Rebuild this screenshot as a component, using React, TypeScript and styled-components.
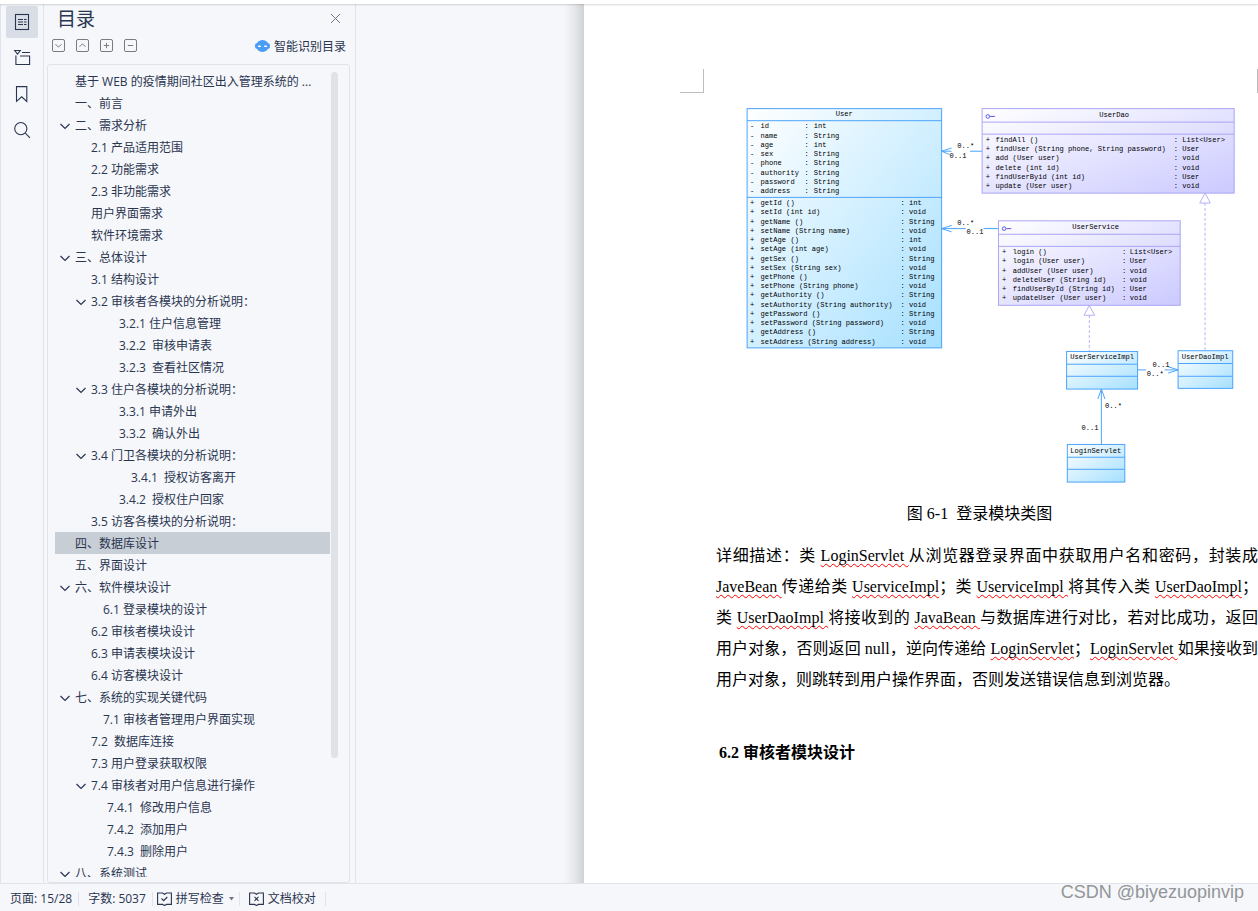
import React from "react";
import styled, { createGlobalStyle, css } from "styled-components";

const ink = "#2a3550";
const chrome = "#f5f7fa";
const line = "#e0e3e9";

const GlobalStyle = createGlobalStyle`
  * { box-sizing: border-box; }
  html, body, #root { height: 100%; }
  body {
    margin: 0;
    overflow: hidden;
    background: ${chrome};
    color: ${ink};
    font: 12px/22px "Open Sans", "Noto Sans CJK SC", sans-serif;
  }
  button { font: inherit; color: inherit; border: 0; padding: 0; background: none; cursor: pointer; }
`;

const Shell = styled.div`
  display: flex;
  flex-direction: column;
  height: 100vh;
`;

const RibbonEdge = styled.div`
  position: relative;
  z-index: 1;
  flex: none;
  height: 4px;
  background: #fff;
  box-shadow: 0 1px 2px rgba(0, 0, 0, 0.16);
`;

const Workspace = styled.div`
  flex: 1;
  min-height: 0;
  display: flex;
`;

const Rail = styled.nav`
  flex: none;
  width: 44px;
  display: flex;
  flex-direction: column;
  align-items: center;
  gap: 4px;
  padding-top: 2px;
  border: solid ${line};
  border-width: 0 1px;
`;

const RailButton = styled.button<{ $active?: boolean }>`
  width: 32px;
  height: 32px;
  display: grid;
  place-items: center;
  border-radius: 2px;
  background: ${(p) => (p.$active ? "#d9dde5" : "transparent")};
`;

const Panel = styled.aside`
  flex: none;
  width: 312px;
  display: flex;
  flex-direction: column;
  border-right: 1px solid ${line};
`;

const PanelHead = styled.header`
  display: flex;
  align-items: center;
  justify-content: space-between;
  height: 29px;
  padding: 0 14px 0 13px;
`;

const PanelTitle = styled.h1`
  margin: 0;
  font-size: 19px;
  font-weight: 400;
  line-height: 30px;
`;

const IconButton = styled.button`
  display: grid;
  place-items: center;
`;

const PanelTools = styled.div`
  display: flex;
  align-items: center;
  gap: 11px;
  height: 31px;
  padding: 0 9px 6px 8px;
`;

const SmartButton = styled.button`
  display: flex;
  align-items: center;
  gap: 4px;
  margin-left: auto;
`;

const SmartLabel = styled.span`
  padding-top: 2px;
`;

const TreeBox = styled.div`
  flex: 1;
  min-height: 0;
  display: flex;
  gap: 1px;
  margin: 0 5px 0 3px;
  padding: 5px 11px 5px 7px;
  border: 1px solid ${line};
  border-radius: 3px;
`;

const Tree = styled.ul`
  flex: 1;
  min-width: 0;
  margin: 0;
  padding: 0;
  list-style: none;
  overflow: hidden;
`;

const TreeRow = styled.button<{ $depth: number; $selected: boolean }>`
  display: flex;
  align-items: center;
  gap: 4px;
  width: 100%;
  height: 22px;
  padding-top: 2px;
  padding-left: ${(p) => 4 + 16 * p.$depth}px;
  text-align: left;
  white-space: pre;
  background: ${(p) => (p.$selected ? "#c8ced6" : "transparent")};
`;

const ChevronSlot = styled.span`
  flex: none;
  display: grid;
  place-items: center;
  width: 12px;
  height: 12px;
`;

const ScrollThumb = styled.div`
  flex: none;
  width: 7px;
  height: 85%;
  margin-top: 2px;
  border-radius: 4px;
  background: #dfe2e6;
`;

const Desk = styled.main`
  flex: 1;
  min-width: 0;
  display: flex;
  overflow: hidden;
`;

const DeskMargin = styled.div`
  flex: none;
  width: 228px;
  background: linear-gradient(to left, #d0d3d5 0, #e6e8eb 10px, ${chrome} 20px);
`;

const Sheet = styled.article`
  flex: 1;
  min-width: 0;
  padding-top: 65px;
  background: #fff;
  color: #000;
  font: 16px/31px "Liberation Serif", "Noto Sans CJK SC", serif;
`;

const CropRow = styled.div`
  display: flex;
  justify-content: space-between;
  height: 24px;
  padding-left: 96px;
`;

const CropMark = styled.span<{ $side: "left" | "right" }>`
  height: 24px;
  ${(p) =>
    p.$side === "left"
      ? css`
          width: 24px;
          border-right: 1px solid #bdbdbd;
          border-bottom: 1px solid #bdbdbd;
        `
      : css`
          width: 1px;
          background: #bdbdbd;
        `}
`;

const Column = styled.div`
  padding: 7px 0 0 132px;
`;

const Figure = styled.figure`
  margin: 0;
`;

const Diagram = styled.svg`
  display: block;
  width: 497px;
  height: 390px;
  margin-left: 24px;
  font: 10px "Liberation Mono", monospace;
  white-space: pre;
`;

const Caption = styled.figcaption`
  padding: 8px 15px 0 0;
  text-align: center;
  white-space: pre;
`;

const Paragraph = styled.p`
  margin: 11px 0 0;
  text-align: justify;
`;

const Misspelt = styled.span`
  text-decoration: underline wavy #f00 1px;
  text-decoration-skip-ink: none;
  text-underline-offset: 2px;
`;

const SectionTitle = styled.h2`
  margin: 42px 0 0 3px;
  font-size: 16px;
  line-height: 31px;
`;

const StatusBar = styled.footer`
  flex: none;
  display: flex;
  align-items: center;
  height: 28px;
  padding: 2px 0 0 1px;
  border-top: 1px solid ${line};
`;

const StatusItem = styled.button`
  display: flex;
  align-items: center;
  gap: 4px;
  height: 14px;
  padding: 0 6px 0 9px;
  border-right: 1px solid ${line};
  white-space: pre;
`;

const StatusTool = styled(StatusItem)`
  padding: 0 4px;
`;

const StatusWideTool = styled(StatusItem)`
  padding: 0 9px;
`;

const Watermark = styled.div`
  position: absolute;
  z-index: 2;
  right: 14px;
  bottom: 8px;
  color: #939598;
  font: 18px/22px "Liberation Sans", sans-serif;
`;

type Entry = { depth: number; label: string; open?: boolean; selected?: boolean };

const entries: Entry[] = [
  { depth: 0, label: "基于 WEB 的疫情期间社区出入管理系统的 ..." },
  { depth: 0, label: "一、前言" },
  { depth: 0, label: "二、需求分析", open: true },
  { depth: 1, label: "2.1 产品适用范围" },
  { depth: 1, label: "2.2 功能需求" },
  { depth: 1, label: "2.3 非功能需求" },
  { depth: 1, label: "用户界面需求" },
  { depth: 1, label: "软件环境需求" },
  { depth: 0, label: "三、总体设计", open: true },
  { depth: 1, label: "3.1 结构设计" },
  { depth: 1, label: "3.2 审核者各模块的分析说明：", open: true },
  { depth: 2, label: "\u30003.2.1 住户信息管理" },
  { depth: 2, label: "\u30003.2.2  审核申请表" },
  { depth: 2, label: "\u30003.2.3  查看社区情况" },
  { depth: 1, label: "3.3 住户各模块的分析说明：", open: true },
  { depth: 2, label: "\u30003.3.1 申请外出" },
  { depth: 2, label: "\u30003.3.2  确认外出" },
  { depth: 1, label: "3.4 门卫各模块的分析说明：", open: true },
  { depth: 2, label: "\u3000\u30003.4.1  授权访客离开" },
  { depth: 2, label: "\u30003.4.2  授权住户回家" },
  { depth: 1, label: "3.5 访客各模块的分析说明：" },
  { depth: 0, label: "四、数据库设计", selected: true },
  { depth: 0, label: "五、界面设计" },
  { depth: 0, label: "六、软件模块设计", open: true },
  { depth: 1, label: "\u30006.1 登录模块的设计" },
  { depth: 1, label: "6.2 审核者模块设计" },
  { depth: 1, label: "6.3 申请表模块设计" },
  { depth: 1, label: "6.4 访客模块设计" },
  { depth: 0, label: "七、系统的实现关键代码", open: true },
  { depth: 1, label: "\u30007.1 审核者管理用户界面实现" },
  { depth: 1, label: "7.2  数据库连接" },
  { depth: 1, label: "7.3 用户登录获取权限" },
  { depth: 1, label: "7.4 审核者对用户信息进行操作", open: true },
  { depth: 2, label: "7.4.1  修改用户信息" },
  { depth: 2, label: "7.4.2  添加用户" },
  { depth: 2, label: "7.4.3  删除用户" },
  { depth: 0, label: "八、系统测试", open: true },
];

const Chevron = () => (
  <svg width="12" height="12" viewBox="0 0 12 12" fill="none" stroke={ink} strokeWidth="1.2">
    <path d="M1.5 4 6 8.5 10.5 4" />
  </svg>
);

const railIcons: { name: string; art: React.ReactNode }[] = [
  {
    name: "目录",
    art: (
      <>
        <rect x="1.5" y=".5" width="13" height="15" />
        <path d="M4 5.5h5M10 5.5h2.5M4 8h5M10 8h2.5M4 10.5h5M10 10.5h2.5" />
      </>
    ),
  },
  {
    name: "章节",
    art: <path d="M.7.5h5.600L3.500 4.200zM8 2.5h8M1.900 5.500v9h13.700v-8.500H6" />,
  },
  { name: "书签", art: <path d="M2.5.6h10.300v14.800L7.700 10.800l-5.200 4.600z" /> },
  {
    name: "查找",
    art: (
      <>
        <circle cx="6.8" cy="6.6" r="6.1" />
        <path d="m11.3 11.2 4.7 4.6" />
      </>
    ),
  },
];

const boxTools: [string, string][] = [
  ["展开", "M3.5 5.2 6.5 8.2 9.5 5.2"],
  ["收起", "M3.5 7.8 6.5 4.8 9.5 7.8"],
  ["增加级别", "M3.8 6.5h5.4M6.5 3.8v5.4"],
  ["降低级别", "M3.8 6.5h5.4"],
];

const BookIcon = ({ mark }: { mark: string }) => (
  <svg width="15" height="14" viewBox="0 0 15 14" fill="none" stroke={ink} strokeWidth="1.1">
    <path d="M5.5 1H.6v11.4h4.9l2 1.1 2-1.1h4.9V1H9.5L7.5 2.3z" />
    <path d={mark} />
  </svg>
);

type Member = [string, string];

type ClassNode = {
  name: string;
  kind: "class" | "interface";
  x: number;
  y: number;
  right: number;
  bottom: number;
  splits: [number, number];
  titleX: number;
  titleY: number;
  groups?: { y: number; sign: string; signX: number; nameX: number; colonX: number; typeX: number; rows: Member[] }[];
};

const nodes: ClassNode[] = [
  {
    name: "User",
    kind: "class",
    x: 10, y: 12, right: 284, bottom: 349, splits: [29, 137], titleX: 147, titleY: 22,
    groups: [
      {
        y: 40, sign: "-", signX: 14, nameX: 29, colonX: 91, typeX: 104,
        rows: [
          ["id", "int"],
          ["name", "String"],
          ["age", "int"],
          ["sex", "String"],
          ["phone", "String"],
          ["authority", "String"],
          ["password", "String"],
          ["address", "String"],
        ],
      },
      {
        y: 148, sign: "+", signX: 14, nameX: 29, colonX: 226, typeX: 238,
        rows: [
          ["getId ()", "int"],
          ["setId (int id)", "void"],
          ["getName ()", "String"],
          ["setName (String name)", "void"],
          ["getAge ()", "int"],
          ["setAge (int age)", "void"],
          ["getSex ()", "String"],
          ["setSex (String sex)", "void"],
          ["getPhone ()", "String"],
          ["setPhone (String phone)", "void"],
          ["getAuthority ()", "String"],
          ["setAuthority (String authority)", "void"],
          ["getPassword ()", "String"],
          ["setPassword (String password)", "void"],
          ["getAddress ()", "String"],
          ["setAddress (String address)", "void"],
        ],
      },
    ],
  },
  {
    name: "UserDao",
    kind: "interface",
    x: 341, y: 12, right: 696, bottom: 131, splits: [31, 48], titleX: 527, titleY: 24,
    groups: [
      {
        y: 59, sign: "+", signX: 346, nameX: 360, colonX: 611, typeX: 623,
        rows: [
          ["findAll ()", "List<User>"],
          ["findUser (String phone, String password)", "User"],
          ["add (User user)", "void"],
          ["delete (int id)", "void"],
          ["findUserByid (int id)", "User"],
          ["update (User user)", "void"],
        ],
      },
    ],
  },
  {
    name: "UserService",
    kind: "interface",
    x: 364, y: 170, right: 620, bottom: 289, splits: [189, 206], titleX: 501, titleY: 182,
    groups: [
      {
        y: 217, sign: "+", signX: 369, nameX: 384, colonX: 538, typeX: 549,
        rows: [
          ["login ()", "List<User>"],
          ["login (User user)", "User"],
          ["addUser (User user)", "void"],
          ["deleteUser (String id)", "void"],
          ["findUserById (String id)", "User"],
          ["updateUser (User user)", "void"],
        ],
      },
    ],
  },
  { name: "UserServiceImpl", kind: "class", x: 460, y: 354, right: 560, bottom: 407, splits: [372, 389], titleX: 510, titleY: 365 },
  { name: "UserDaoImpl", kind: "class", x: 617, y: 353, right: 694, bottom: 406, splits: [371, 389], titleX: 655, titleY: 364 },
  { name: "LoginServlet", kind: "class", x: 461, y: 485, right: 542, bottom: 538, splits: [503, 520], titleX: 501, titleY: 497 },
];

const multiplicities: [number, number, string][] = [
  [306, 68, "0..*"],
  [295, 81, "0..1"],
  [306, 176, "0..*"],
  [319, 189, "0..1"],
  [581, 376, "0..1"],
  [573, 389, "0..*"],
  [514, 433, "0..*"],
  [481, 464, "0..1"],
];

const blue = "#4ba3fb";
const violet = "#a9a5f5";

const NodeArt = ({ node }: { node: ClassNode }) => (
  <g>
    <rect
      x={node.x}
      y={node.y}
      width={node.right - node.x}
      height={node.bottom - node.y}
      fill={`url(#${node.kind})`}
      stroke={node.kind === "class" ? blue : violet}
      strokeWidth="1.4"
    />
    <path
      d={node.splits.map((y) => `M${node.x} ${y}H${node.right}`).join("")}
      stroke={node.kind === "class" ? blue : violet}
      strokeWidth="1.4"
    />
    {node.kind === "interface" && (
      <g fill="none" stroke="#5a55ee" strokeWidth="1.4">
        <circle cx={node.x + 8} cy={node.y + 11} r="2.5" />
        <path d={`M${node.x + 11} ${node.y + 11}h7`} />
      </g>
    )}
    <text x={node.titleX} y={node.titleY} textAnchor="middle">
      {node.name}
    </text>
    {node.groups?.map((g) =>
      g.rows.map(([name, type], i) => (
        <React.Fragment key={name}>
          <text x={g.signX} y={g.y + 13 * i}>{g.sign}</text>
          <text x={g.nameX} y={g.y + 13 * i}>{name}</text>
          <text x={g.colonX} y={g.y + 13 * i}>:</text>
          <text x={g.typeX} y={g.y + 13 * i}>{type}</text>
        </React.Fragment>
      ))
    )}
  </g>
);

const ClassDiagram = () => (
  <Diagram viewBox="0 0 700 549" fill="#000" role="img" aria-label="登录模块类图">
    <defs>
      <linearGradient id="class" x1="0" y1="0" x2="1" y2="1">
        <stop offset="0" stopColor="#fff" />
        <stop offset="1" stopColor="#a6e0ff" />
      </linearGradient>
      <linearGradient id="interface" x1="0" y1="0" x2="1" y2="1">
        <stop offset="0" stopColor="#fff" />
        <stop offset="1" stopColor="#cbc9ff" />
      </linearGradient>
    </defs>
    {nodes.map((n) => (
      <NodeArt key={n.name} node={n} />
    ))}
    <g fill="none" stroke={blue} strokeWidth="1.4">
      <path d="M341 72H324M298 72H284M298 67.5 284 72l11 4.5" />
      <path d="M364 181H343M318 181H284M298 176.5 284 181l14 4.5" />
      <path d="M560 380h12M598 380h19M603 375.5 617 380l-14 4.5" />
      <path d="M509 485V407M504 421l5-14 5 14" />
    </g>
    <g fill="none" stroke={violet} strokeWidth="1.2">
      <path d="m492 289 7.5 14h-15zM655 131l7.5 14h-15z" />
      <path d="M492 303v51M655 145v208" strokeDasharray="4 3" />
    </g>
    {multiplicities.map(([x, y, label]) => (
      <text key={`${x}-${y}`} x={x} y={y}>
        {label}
      </text>
    ))}
  </Diagram>
);

export default function App() {
  return (
    <Shell>
      <GlobalStyle />
      <RibbonEdge />
      <Workspace>
        <Rail>
          {railIcons.map((icon, i) => (
            <RailButton key={icon.name} $active={i === 0} aria-label={icon.name}>
              <svg width="16" height="16" viewBox="0 0 16 16" overflow="visible" fill="none" stroke={ink} strokeWidth="1.1">
                {icon.art}
              </svg>
            </RailButton>
          ))}
        </Rail>
        <Panel>
          <PanelHead>
            <PanelTitle>目录</PanelTitle>
            <IconButton aria-label="关闭">
              <svg width="11" height="11" viewBox="0 0 11 11" stroke="#6d7587" strokeWidth="1">
                <path d="m1 1 9 9M10 1l-9 9" />
              </svg>
            </IconButton>
          </PanelHead>
          <PanelTools>
            {boxTools.map(([name, d]) => (
              <IconButton key={name} aria-label={name}>
                <svg width="13" height="13" viewBox="0 0 13 13" fill="none" stroke="#777c84">
                  <rect x=".5" y=".5" width="12" height="12" rx="1.5" />
                  <path d={d} />
                </svg>
              </IconButton>
            ))}
            <SmartButton>
              <svg width="15" height="12" viewBox="0 0 15 12">
                <rect y="3.2" width="15" height="5.6" rx="2" fill="#4a9cf5" />
                <ellipse cx="7.5" cy="6" rx="6.4" ry="6" fill="#4a9cf5" />
                <path d="M2.8 6.9a1.6 1.6 0 0 1 3.2 0zM9 6.9a1.6 1.6 0 0 1 3.2 0z" fill="#fff" />
              </svg>
              <SmartLabel>智能识别目录</SmartLabel>
            </SmartButton>
          </PanelTools>
          <TreeBox>
            <Tree>
              {entries.map((e) => (
                <li key={e.label}>
                  <TreeRow $depth={e.depth} $selected={!!e.selected}>
                    <ChevronSlot>{e.open && <Chevron />}</ChevronSlot>
                    {e.label}
                  </TreeRow>
                </li>
              ))}
            </Tree>
            <ScrollThumb />
          </TreeBox>
        </Panel>
        <Desk>
          <DeskMargin />
          <Sheet>
            <CropRow>
              <CropMark $side="left" />
              <CropMark $side="right" />
            </CropRow>
            <Column>
              <Figure>
                <ClassDiagram />
                <Caption>图 6-1  登录模块类图</Caption>
              </Figure>
              <Paragraph>
                详细描述：类 <Misspelt>LoginServlet </Misspelt>从浏览器登录界面中获取用户名和密码，封装成 <Misspelt>JaveBean </Misspelt>
                传递给类 <Misspelt>UserviceImpl</Misspelt>；类 <Misspelt>UserviceImpl </Misspelt>将其传入类 <Misspelt>UserDaoImpl</Misspelt>
                ；类 <Misspelt>UserDaoImpl </Misspelt>将接收到的 <Misspelt>JavaBean </Misspelt>
                与数据库进行对比，若对比成功，返回用户对象，否则返回 null，逆向传递给 <Misspelt>LoginServlet</Misspelt>；
                <Misspelt>LoginServlet </Misspelt>如果接收到用户对象，则跳转到用户操作界面，否则发送错误信息到浏览器。
              </Paragraph>
              <SectionTitle>6.2 审核者模块设计</SectionTitle>
            </Column>
          </Sheet>
        </Desk>
      </Workspace>
      <StatusBar>
        <StatusItem>页面: 15/28</StatusItem>
        <StatusItem>字数: 5037</StatusItem>
        <StatusTool>
          <BookIcon mark="m4.5 6.5 2.2 2.2 3.6-3.7" />
          拼写检查
          <svg width="7" height="4" viewBox="0 0 7 4" fill="#6d7587">
            <path d="M1 0h5L3.5 3.5z" />
          </svg>
        </StatusTool>
        <StatusWideTool>
          <BookIcon mark="m5.5 4.8 4 4M9.5 4.8l-4 4" />
          文档校对
        </StatusWideTool>
      </StatusBar>
      <Watermark>CSDN @biyezuopinvip</Watermark>
    </Shell>
  );
}
